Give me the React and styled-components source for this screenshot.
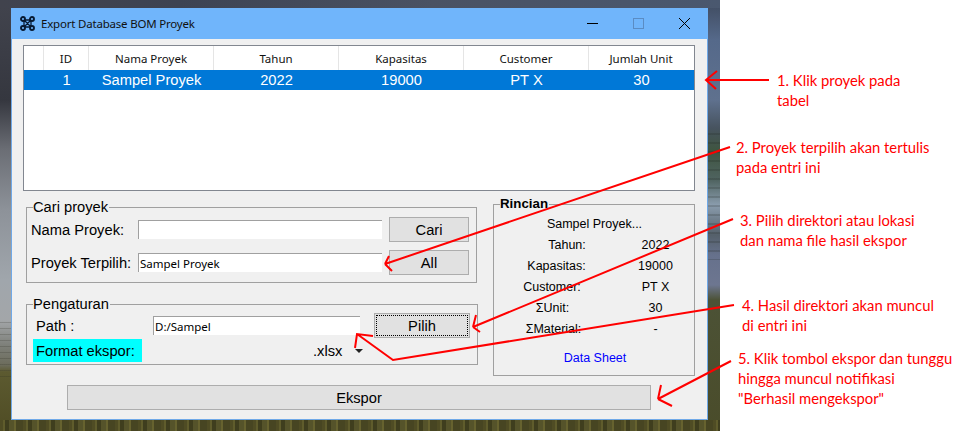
import React from "react";
import styled, { createGlobalStyle } from "styled-components";

const Global = createGlobalStyle`
  html, body { margin: 0; padding: 0; background: #fff; }
  #root { width: 960px; height: 431px; overflow: hidden; }
`;

const Page = styled.div`
  position: relative;
  width: 960px;
  height: 431px;
  background: #fff;
  overflow: hidden;
`;

const Desktop = styled.div`
  width: 720px;
  height: 431px;
  box-sizing: border-box;
  padding: 8px 12px 0 11px;
  background-repeat: no-repeat;
  background-image:
    repeating-linear-gradient(90deg, #4f4c24 0 3px, #5f5c2c 3px 5px, #3f3e1e 5px 9px, #55532a 9px 14px, #66622f 14px 16px, #474522 16px 23px),
    linear-gradient(90deg, #41434d 0, #3d4352 25%, #4a5263 60%, #4a586f 100%),
    repeating-linear-gradient(180deg, rgba(25,30,25,0) 0 3px, rgba(25,30,25,.18) 3px 5px, rgba(25,30,25,0) 5px 9px),
    linear-gradient(180deg, #3f4a5e 0, #55698a 40px, #5f718e 100px, #47535f 128px, #3f5540 150px, #4f6360 180px, #8a9cad 205px, #55606a 235px, #66718c 255px, #6d7690 285px, #4c5236 300px, #4a4c2a 431px),
    repeating-linear-gradient(180deg, rgba(40,40,30,0) 0 2px, rgba(40,40,30,.2) 2px 3px, rgba(40,40,30,0) 3px 6px),
    linear-gradient(180deg, #42444e 0, #35373f 100px, #6b6e75 150px, #8d9299 210px, #a0a6ac 280px, #a3a6a9 320px, #7e807a 345px, #6c6c5c 365px, #5c5a30 372px, #4f4c24 431px);
  background-size: 100% 11px, 100% 8px, 12px 130px, 12px 431px, 11px 60px, 11px 431px;
  background-position: 0 420px, 0 0, 708px 130px, 708px 0, 0 320px, 0 0;
`;

const Window = styled.div`
  width: 697px;
  height: 412px;
  box-sizing: border-box;
  border: 1px solid #70a9e8;
  border-top: none;
  background: #f0f0f0;
  display: flex;
  flex-direction: column;
  font-family: "Liberation Sans", Arial, sans-serif;
  color: #000;
`;

const TitleBar = styled.div`
  height: 31px;
  flex: none;
  background: #70b5fb;
  display: flex;
  align-items: center;
  padding: 0 1px 0 9px;
  margin: 0 -1px;
`;

const AppIcon = styled.svg`
  width: 15px;
  height: 15px;
  margin-right: 6px;
  flex: none;
`;

const Title = styled.div`
  font: 11.5px "Noto Sans", sans-serif;
  letter-spacing: -0.2px;
  color: #111;
  flex: 1;
`;

const Controls = styled.div`
  display: flex;
  align-items: center;
`;

const ControlButton = styled.div`
  width: 46px;
  height: 31px;
  box-sizing: border-box;
  padding-bottom: 1px;
  display: flex;
  align-items: center;
  justify-content: center;
`;

const Body = styled.div`
  flex: 1;
  display: flex;
  flex-direction: column;
  padding: 6px 12px 0 11px;
`;

const Table = styled.div`
  width: 672px;
  height: 146px;
  box-sizing: border-box;
  border: 1px solid #828790;
  background: #fff;
  flex: none;
`;

const Row = styled.div`
  display: grid;
  grid-template-columns: 20px 45px 125px 125px 125px 125px 105px;
`;

const HeadCell = styled.div`
  height: 24px;
  box-sizing: border-box;
  border-right: 1px solid ${(p) => (p.$last ? "transparent" : "#e5e5e5")};
  font: 11.5px "Noto Sans", sans-serif;
  color: #111;
  display: flex;
  align-items: center;
  justify-content: center;
`;

const DataCell = styled.div`
  height: 20px;
  background: #0078d7;
  color: #fff;
  font-size: 14.7px;
  display: flex;
  align-items: center;
  justify-content: center;
`;

const Middle = styled.div`
  display: flex;
  margin-top: 6px;
  padding-left: 3px;
`;

const LeftColumn = styled.div`
  width: 452px;
  display: flex;
  flex-direction: column;
  padding-top: 3px;
`;

const Group = styled.fieldset`
  margin: 0;
  padding: 0;
  min-width: 0;
  box-sizing: border-box;
  width: ${(p) => p.$w}px;
  height: ${(p) => p.$h}px;
  margin-top: ${(p) => p.$mt || 0}px;
  border: 1px solid #a0a0a0;
  position: relative;
`;

const Legend = styled.legend`
  margin-left: 6px;
  padding: 0;
  font-size: ${(p) => (p.$bold ? "13.3px" : "14.7px")};
  font-weight: ${(p) => (p.$bold ? 700 : 400)};
  line-height: 14px;
  padding-right: 1px;
`;

const FormGrid = styled.div`
  display: grid;
  grid-template-columns: 107px 244px 80px;
  column-gap: 0;
  padding: 3px 0 0 4px;
  row-gap: 8px;
  align-items: center;
`;

const FieldLabel = styled.div`
  font-size: 14.7px;
  white-space: nowrap;
`;

const Entry = styled.div`
  height: 19px;
  box-sizing: border-box;
  background: #fff;
  border-top: 1px solid #a0a0a0;
  border-left: 1px solid #a0a0a0;
  font: 11.5px "Noto Sans", sans-serif;
  color: #000;
  padding-left: 1px;
  display: flex;
  align-items: center;
  width: ${(p) => p.$w || 244}px;
`;

const Button = styled.div`
  box-sizing: border-box;
  background: #e1e1e1;
  border: 1px solid #adadad;
  width: ${(p) => p.$w}px;
  height: 25px;
  font-size: 14.7px;
  display: flex;
  align-items: center;
  justify-content: center;
  position: relative;
  ${(p) =>
    p.$focus &&
    `&::after { content: ""; position: absolute; inset: 1px; border: 1px dotted #000; }`}
`;

const CariButton = styled(Button)`
  margin-left: 7px;
`;

const SettingRow = styled.div`
  display: flex;
  align-items: center;
`;

const PathRow = styled(SettingRow)`
  height: 25px;
  padding: 0 0 0 9px;
  margin-top: 2px;
`;

const PathLabel = styled(FieldLabel)`
  width: 117px;
`;

const PickButton = styled(Button)`
  margin-left: 14px;
`;

const FormatRow = styled(SettingRow)`
  margin-top: 1px;
  padding-left: 6px;
`;

const FormatLabel = styled.div`
  width: 109px;
  height: 23px;
  background: #0ff;
  font-size: 14.7px;
  box-sizing: border-box;
  padding-left: 3px;
  display: flex;
  align-items: center;
`;

const FormatValue = styled.div`
  font-size: 14.7px;
  margin-left: 171px;
`;

const Caret = styled.div`
  width: 0;
  height: 0;
  margin-left: 13px;
  border-left: 4px solid transparent;
  border-right: 4px solid transparent;
  border-top: 4px solid #222;
`;

const DetailGroup = styled(Group)`
  margin-left: 15px;
  padding-top: 3px;
`;

const DetailTitle = styled.div`
  font-size: 12.5px;
  text-align: center;
  height: 20px;
  line-height: 20px;
  padding-left: 1px;
`;

const DetailRow = styled.div`
  display: grid;
  grid-template-columns: 120px 83px;
  height: 21px;
  align-items: center;
  font-size: 12.5px;
  text-align: center;
`;

const DetailLabel = styled.div`
  margin-left: ${(p) => p.$x || 0}px;
  white-space: nowrap;
`;

const DataSheet = styled.div`
  color: #0000ff;
  font-size: 12.5px;
  text-align: center;
  margin-top: 12px;
  padding-left: 2px;
`;

const ExportRow = styled.div`
  padding: 9px 0 0 44px;
`;

const Note = styled.div`
  position: absolute;
  left: ${(p) => p.$x}px;
  top: ${(p) => p.$y}px;
  font: 14.8px/20px Lato, sans-serif;
  color: #ff0000;
  white-space: pre;
`;

const Overlay = styled.svg`
  position: absolute;
  left: 0;
  top: 0;
  pointer-events: none;
`;

const columns = ["", "ID", "Nama Proyek", "Tahun", "Kapasitas", "Customer", "Jumlah Unit"];
const values = ["", "1", "Sampel Proyek", "2022", "19000", "PT X", "30"];
const details = [
  ["Tahun:", "2022", 26],
  ["Kapasitas:", "19000", 5],
  ["Customer:", "PT X", -4],
  ["ΣUnit:", "30", -3],
  ["ΣMaterial:", "-", -1],
];
const notes = [
  [777, 70, "1. Klik proyek pada\ntabel"],
  [736, 137, "2. Proyek terpilih akan tertulis\npada entri ini"],
  [740, 210, "3. Pilih direktori atau lokasi\ndan nama file hasil ekspor"],
  [742, 295, "4. Hasil direktori akan muncul\ndi entri ini"],
  [738, 348, "5. Klik tombol ekspor dan tunggu\nhingga muncul notifikasi\n\"Berhasil mengekspor\""],
];
const arrows = [
  "M769 80 L706 80 M717 71 L706 80 L716 89",
  "M730 147 L385 264 M385 264 L392 271 M385 264 L389 256",
  "M733 219 L473 327 M473 327 L476 315 M473 327 L480 332",
  "M734 305 L393 360 L357 334 M373 336 L357 334 L355 348",
  "M731 361 L658 399 M658 399 L661 385 M658 399 L672 406",
];

export default function App() {
  return (
    <Page>
      <Global />
      <Desktop>
        <Window>
          <TitleBar>
            <AppIcon viewBox="0 0 15 15" fill="none" stroke="#071a33" strokeWidth="1.9">
              <circle cx="3" cy="3" r="2" />
              <circle cx="12" cy="3" r="2" />
              <circle cx="3" cy="12" r="2" />
              <circle cx="12" cy="12" r="2" />
              <path d="M4.5 4.5 L10.5 10.5 M10.5 4.5 L4.5 10.5 M5 4 H10 M5 11 H10 M4 5 V10 M11 5 V10" strokeWidth="1.3" />
            </AppIcon>
            <Title>Export Database BOM Proyek</Title>
            <Controls>
              <ControlButton>
                <svg width="11" height="11" viewBox="0 0 11 11"><path d="M0 5.5 H11" stroke="#000" /></svg>
              </ControlButton>
              <ControlButton>
                <svg width="11" height="11" viewBox="0 0 11 11"><rect x=".5" y=".5" width="10" height="10" fill="none" stroke="#5a8cc4" /></svg>
              </ControlButton>
              <ControlButton>
                <svg width="11" height="11" viewBox="0 0 11 11"><path d="M0 0 L11 11 M11 0 L0 11" stroke="#000" /></svg>
              </ControlButton>
            </Controls>
          </TitleBar>
          <Body>
            <Table>
              <Row>
                {columns.map((c, i) => (
                  <HeadCell key={i} $last={i === 6}>{c}</HeadCell>
                ))}
              </Row>
              <Row>
                {values.map((v, i) => (
                  <DataCell key={i}>{v}</DataCell>
                ))}
              </Row>
            </Table>
            <Middle>
              <LeftColumn>
                <Group $w={451} $h={83}>
                  <Legend>Cari proyek</Legend>
                  <FormGrid>
                    <FieldLabel>Nama Proyek:</FieldLabel>
                    <Entry />
                    <CariButton $w={80}>Cari</CariButton>
                    <FieldLabel>Proyek Terpilih:</FieldLabel>
                    <Entry>Sampel Proyek</Entry>
                    <CariButton $w={80}>All</CariButton>
                  </FormGrid>
                </Group>
                <Group $w={452} $h={68} $mt={14}>
                  <Legend>Pengaturan</Legend>
                  <PathRow>
                    <PathLabel>Path :</PathLabel>
                    <Entry $w={207}>D:/Sampel</Entry>
                    <PickButton $w={96} $focus>Pilih</PickButton>
                  </PathRow>
                  <FormatRow>
                    <FormatLabel>Format ekspor:</FormatLabel>
                    <FormatValue>.xlsx</FormatValue>
                    <Caret />
                  </FormatRow>
                </Group>
              </LeftColumn>
              <DetailGroup $w={203} $h={179}>
                <Legend $bold>Rincian</Legend>
                <DetailTitle>Sampel Proyek...</DetailTitle>
                {details.map(([label, value, x]) => (
                  <DetailRow key={label}>
                    <DetailLabel $x={x}>{label}</DetailLabel>
                    <div>{value}</div>
                  </DetailRow>
                ))}
                <DataSheet>Data Sheet</DataSheet>
              </DetailGroup>
            </Middle>
            <ExportRow>
              <Button $w={584}>Ekspor</Button>
            </ExportRow>
          </Body>
        </Window>
      </Desktop>
      {notes.map(([x, y, text]) => (
        <Note key={x} $x={x} $y={y}>{text}</Note>
      ))}
      <Overlay width="960" height="431" viewBox="0 0 960 431" fill="none" stroke="#ff0000" strokeWidth="2">
        {arrows.map((d) => (
          <path key={d} d={d} />
        ))}
      </Overlay>
    </Page>
  );
}
